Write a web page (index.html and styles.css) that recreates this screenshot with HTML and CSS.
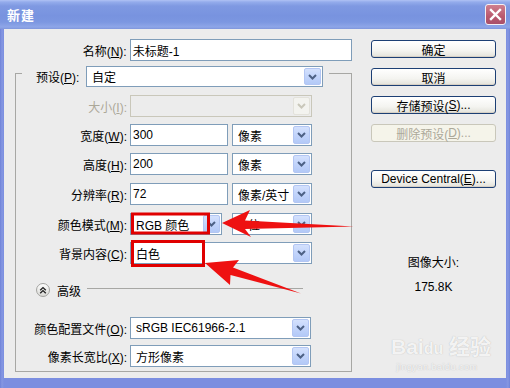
FILE: index.html
```html
<!DOCTYPE html>
<html>
<head>
<meta charset="utf-8">
<link rel="stylesheet" href="styles.css">
</head>
<body>
<div class="window">
  <div class="titlebar">
    <span class="title">新建</span>
    <span class="close"><svg width="13" height="13" viewBox="0 0 13 13"><path d="M2 2 L11 11 M11 2 L2 11" stroke="#fff" stroke-width="2.4" stroke-linecap="square"/></svg></span>
  </div>
  <div class="client">
    <div class="left">
      <div class="row name-row">
        <label class="lbl lbl-name">名称(<u>N</u>):</label>
        <div class="input w-name">未标题-1</div>
      </div>
      <div class="group">
        <div class="group-head">
          <label class="lbl-preset">预设(<u>P</u>):</label>
          <div class="select w-preset"><span>自定</span><i class="dd"><svg width="9" height="6" viewBox="0 0 9 6"><path d="M1 1 L4.5 4.5 L8 1" fill="none" stroke="#4d6185" stroke-width="2"/></svg></i></div>
        </div>
        <div class="rows rows-main">
          <div class="row">
            <label class="lbl disabled">大小(<u>I</u>):</label>
            <div class="select w-full is-disabled"><span></span><i class="dd dd-off"><svg width="9" height="6" viewBox="0 0 9 6"><path d="M1 1 L4.5 4.5 L8 1" fill="none" stroke="#c9c7ba" stroke-width="2"/></svg></i></div>
          </div>
          <div class="row">
            <label class="lbl">宽度(<u>W</u>):</label>
            <div class="input w-num">300</div>
            <div class="select w-unit"><span>像素</span><i class="dd"><svg width="9" height="6" viewBox="0 0 9 6"><path d="M1 1 L4.5 4.5 L8 1" fill="none" stroke="#4d6185" stroke-width="2"/></svg></i></div>
          </div>
          <div class="row">
            <label class="lbl">高度(<u>H</u>):</label>
            <div class="input w-num">200</div>
            <div class="select w-unit"><span>像素</span><i class="dd"><svg width="9" height="6" viewBox="0 0 9 6"><path d="M1 1 L4.5 4.5 L8 1" fill="none" stroke="#4d6185" stroke-width="2"/></svg></i></div>
          </div>
          <div class="row step">
            <label class="lbl">分辨率(<u>R</u>):</label>
            <div class="input w-num">72</div>
            <div class="select w-unit"><span>像素/英寸</span><i class="dd"><svg width="9" height="6" viewBox="0 0 9 6"><path d="M1 1 L4.5 4.5 L8 1" fill="none" stroke="#4d6185" stroke-width="2"/></svg></i></div>
          </div>
          <div class="row step">
            <label class="lbl">颜色模式(<u>M</u>):</label>
            <div class="select w-mode"><span>RGB 颜色</span><i class="dd"><svg width="9" height="6" viewBox="0 0 9 6"><path d="M1 1 L4.5 4.5 L8 1" fill="none" stroke="#4d6185" stroke-width="2"/></svg></i></div>
            <div class="select w-bits"><span>8 位</span><i class="dd"><svg width="9" height="6" viewBox="0 0 9 6"><path d="M1 1 L4.5 4.5 L8 1" fill="none" stroke="#4d6185" stroke-width="2"/></svg></i></div>
          </div>
          <div class="row">
            <label class="lbl">背景内容(<u>C</u>):</label>
            <div class="select w-full"><span>白色</span><i class="dd"><svg width="9" height="6" viewBox="0 0 9 6"><path d="M1 1 L4.5 4.5 L8 1" fill="none" stroke="#4d6185" stroke-width="2"/></svg></i></div>
          </div>
        </div>
        <div class="adv">
          <span class="adv-btn"><svg width="14" height="14" viewBox="0 0 14 14"><defs><linearGradient id="g" x1="0" y1="0" x2="0" y2="1"><stop offset="0" stop-color="#ffffff"/><stop offset="1" stop-color="#d8d8d4"/></linearGradient></defs><circle cx="7" cy="7" r="6.5" fill="url(#g)" stroke="#a3a3a0"/><path d="M4.2 7.2 L7 4.6 L9.8 7.2 M4.2 10.2 L7 7.6 L9.8 10.2" fill="none" stroke="#222" stroke-width="1.4"/></svg></span>
          <span class="adv-text">高级</span>
          <span class="adv-line"></span>
        </div>
        <div class="rows rows-adv">
          <div class="row">
            <label class="lbl">颜色配置文件(<u>O</u>):</label>
            <div class="select w-prof"><span>sRGB IEC61966-2.1</span><i class="dd"><svg width="9" height="6" viewBox="0 0 9 6"><path d="M1 1 L4.5 4.5 L8 1" fill="none" stroke="#4d6185" stroke-width="2"/></svg></i></div>
          </div>
          <div class="row">
            <label class="lbl">像素长宽比(<u>X</u>):</label>
            <div class="select w-prof"><span>方形像素</span><i class="dd"><svg width="9" height="6" viewBox="0 0 9 6"><path d="M1 1 L4.5 4.5 L8 1" fill="none" stroke="#4d6185" stroke-width="2"/></svg></i></div>
          </div>
        </div>
      </div>
    </div>
    <div class="right">
      <div class="btn">确定</div>
      <div class="btn">取消</div>
      <div class="btn">存储预设(<u>S</u>)...</div>
      <div class="btn btn-off">删除预设(<u>D</u>)...</div>
      <div class="btn btn-dc">Device Central(<u>E</u>)...</div>
      <div class="info">
        <div>图像大小:</div>
        <div class="info-size">175.8K</div>
      </div>
    </div>
  </div>
  <div class="watermark">
    <div class="wm-main">Bai<span class="wm-du">du</span> 经验</div>
    <div class="wm-url">jingyan.baidu.com</div>
  </div>
  <svg class="annot" width="510" height="388" viewBox="0 0 510 388">
    <rect x="132.5" y="214" width="76" height="19" fill="none" stroke="#e00000" stroke-width="3"/>
    <rect x="132.5" y="241.5" width="71" height="24" fill="none" stroke="#e00000" stroke-width="3"/>
    <path d="M222 223 L250 210 L245 220.5 L354 226.5 L245 229 L251 237 Z" fill="#ee1111"/>
    <path d="M205 263 L239 260 L233 267.5 L301 293.5 L230.5 275 L230 285 Z" fill="#ee1111"/>
  </svg>
</div>
</body>
</html>
```
FILE: styles.css
```css
* { box-sizing: border-box; margin: 0; padding: 0; }
html, body { width: 510px; height: 388px; overflow: hidden; }
body {
  font-family: "Liberation Sans", "Noto Sans CJK SC", sans-serif;
  font-size: 12px;
  color: #000;
  background: #7b8ee0;
}
u { text-decoration: underline; text-underline-offset: 1px; }

.window {
  position: relative;
  width: 510px;
  height: 388px;
  display: flex;
  flex-direction: column;
  background: linear-gradient(90deg, #6f82d8 0, #8597e2 2px, #7b8ee0 4px, #7b8ee0 506px, #8597e2 508px, #6f82d8 510px);
}

.titlebar {
  height: 29px;
  flex: none;
  display: flex;
  align-items: center;
  justify-content: space-between;
  padding: 0 4px 0 7px;
  background: linear-gradient(#b0c2f4 0, #94acec 2px, #7f99e2 6px, #7893df 16px, #7c97e1 22px, #8ea6e8 27px, #7f95dc 29px);
}
.title {
  color: #fff;
  font-family: "Noto Sans CJK SC", sans-serif;
  font-weight: bold;
  font-size: 13px;
  letter-spacing: 1px;
}
.close {
  width: 21px;
  height: 21px;
  border: 1px solid #f4f0f4;
  border-radius: 3px;
  background: linear-gradient(#cf7f8f, #b9596e 60%, #a9506a);
  display: flex;
  align-items: center;
  justify-content: center;
}

.client {
  flex: 1;
  margin: 0 4px 10px 4px;
  background: #ececec;
  display: flex;
  padding-top: 10px;
}

.left { width: 348px; flex: none; }

.row {
  display: flex;
  align-items: center;
  height: 22px;
}
.lbl {
  width: 111px;
  margin-right: 3px;
  text-align: right;
  white-space: nowrap;
}
.lbl-name { width: 123px; }
.disabled { color: #aca899; }

.input {
  height: 22px;
  border: 1px solid #7f9db9;
  background: #fff;
  padding-left: 2px;
  display: flex;
  align-items: center;
  white-space: nowrap;
}
.w-name { width: 223px; }
.w-num { width: 98px; }

.select {
  height: 22px;
  border: 1px solid #7f9db9;
  background: #fff;
  padding: 1px 1px 1px 5px;
  display: flex;
  align-items: center;
  white-space: nowrap;
}
.select span { flex: 1; overflow: hidden; }
.select.is-disabled { border-color: #c9c7ba; background: #ececec; }
.w-preset { width: 237px; height: 21px; }
.w-full { width: 182px; }
.w-unit { width: 80px; margin-left: 4px; }
.w-mode { width: 92px; }
.w-bits { width: 80px; margin-left: 10px; }
.w-prof { width: 181px; }

.dd {
  width: 17px;
  height: 100%;
  flex: none;
  border: 1px solid #b3c6f3;
  border-radius: 2px;
  background: linear-gradient(#d4e1fd, #c2d4fb 50%, #b3c9f7);
  display: flex;
  align-items: center;
  justify-content: center;
}
.dd-off {
  border-color: #e3e2db;
  background: #f3f3ef;
}

.group {
  margin: 12px 0 0 11px;
  width: 337px;
  height: 299px;
  border: 1px solid #a7a7a4;
}
.group-head {
  margin: -8px 0 0 6px;
  width: fit-content;
  display: flex;
  align-items: center;
  height: 21px;
  padding: 0 6px 0 14px;
  background: #ececec;
}
.lbl-preset { width: 50px; white-space: nowrap; }

.rows { display: flex; flex-direction: column; }
.rows-main { margin-top: 8px; gap: 7px; }
.rows-main .step { margin-top: 1px; }

.adv {
  margin: 17px 0 0 20px;
  height: 18px;
  display: flex;
  align-items: center;
}
.adv-btn { width: 14px; height: 14px; display: flex; }
.adv-text { margin-left: 7px; }
.adv-line {
  flex: 1;
  height: 1px;
  background: #a7a7a4;
  margin: 0 48px 3px 6px;
}

.rows-adv { margin-top: 18px; gap: 6px; }

.right {
  width: 125px;
  margin-left: 19px;
  padding-top: 1px;
  display: flex;
  flex-direction: column;
  gap: 10px;
}
.btn {
  height: 18px;
  border: 1px solid #1c3f74;
  border-radius: 3px;
  background: linear-gradient(#ffffff, #f4f4f0 60%, #e3e2da);
  box-shadow: inset 0 -1px 0 #d6d0c5;
  display: flex;
  align-items: center;
  justify-content: center;
  white-space: nowrap;
}
.btn-off {
  border-color: #c9c7ba;
  color: #aca899;
  background: #f5f4ea;
  box-shadow: none;
}
.btn-dc { margin-top: 18px; }

.info {
  margin-top: 57px;
  text-align: center;
  line-height: 16px;
}
.info-size { margin-top: 8px; }

.watermark {
  position: absolute;
  left: 391px;
  top: 334px;
  width: 92px;
  text-align: center;
  color: rgba(255, 255, 255, 0.85);
  text-shadow: 0 0 1px rgba(120, 120, 120, 0.5);
}
.wm-main {
  font-family: "Liberation Sans", "Noto Sans CJK SC", sans-serif;
  font-size: 21px;
  font-weight: bold;
  line-height: 26px;
  white-space: nowrap;
}
.wm-du { font-size: 16px; }
.wm-url { font-size: 9px; line-height: 10px; letter-spacing: 0.5px; }

.annot {
  position: absolute;
  left: 0;
  top: 0;
  pointer-events: none;
}
```
